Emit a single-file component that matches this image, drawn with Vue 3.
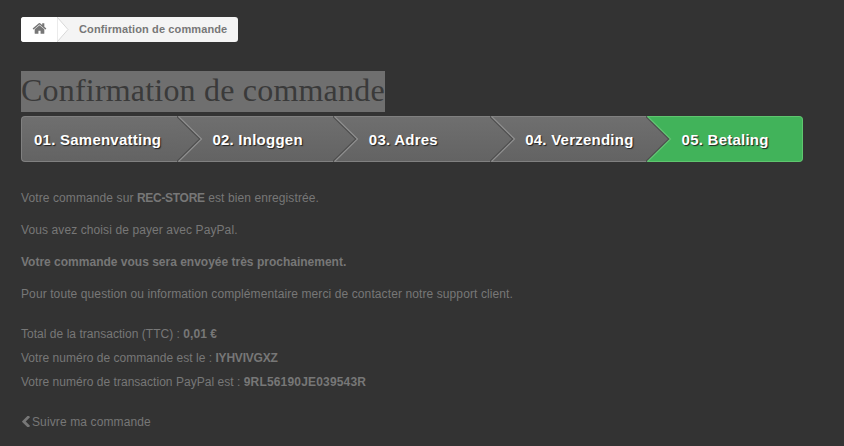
<script setup>
const steps = ['01. Samenvatting', '02. Inloggen', '03. Adres', '04. Verzending', '05. Betaling']
</script>

<template>
  <div class="page">
    <nav class="crumb">
      <span class="crumb-home">
        <svg class="home" viewBox="0 0 1792 1792" aria-hidden="true"><path d="M1472 992v480q0 26-19 45t-45 19h-384v-384h-256v384h-384q-26 0-45-19t-19-45v-480q0-1 .5-3t.5-3l575-474 575 474q1 2 1 6zm223-69l-62 74q-8 9-21 11h-3q-13 0-21-7l-692-577-692 577q-12 8-24 7-13-2-21-11l-62-74q-8-10-7-23.500t11-21.500l719-599q32-26 76-26t76 26l244 204v-195q0-14 9-23t23-9h192q14 0 23 9t9 23v408l219 182q10 8 11 21.500t-7 23.500z"/></svg>
        <svg class="crumb-arrow" viewBox="0 0 12 25" aria-hidden="true"><path d="M0 0 L11 12.500 L0 25 Z" fill="#fff" stroke="#d8d8d8" stroke-width="1"/></svg>
      </span>
      <span class="crumb-text">Confirmation de commande</span>
    </nav>

    <h1 class="title"><span>Confirmation de commande</span></h1>

    <ol class="steps">
      <li v-for="(s, i) in steps" :key="s" class="step" :class="{ first: i === 0, last: i === 4 }">
        <span class="label">{{ s }}</span>
        <svg v-if="i < 4" class="arrow" viewBox="0 0 26 46" aria-hidden="true">
          <path d="M0 0 L23 23 L0 46 Z" :fill="'url(#g' + i + ')'" />
          <path d="M0 0.500 L23 23 L0 45.500" fill="none" stroke="#4c4c4c" stroke-width="1.500" />
          <path d="M1.500 0.500 L24.500 23 L1.500 45.500" fill="none" :stroke="i === 3 ? '#63c274' : '#8f8f8f'" stroke-width="1.200" />
          <defs>
            <linearGradient :id="'g' + i" x1="0" y1="0" x2="0" y2="1">
              <stop offset="0" stop-color="#6f6f6f" />
              <stop offset="1" stop-color="#636363" />
            </linearGradient>
          </defs>
        </svg>
      </li>
    </ol>

    <div class="body">
      <p>Votre commande sur <b class="tight">REC-STORE</b> est bien enregistrée.</p>
      <p>Vous avez choisi de payer avec PayPal.</p>
      <p><b>Votre commande vous sera envoyée très prochainement.</b></p>
      <p>Pour toute question ou information complémentaire merci de contacter notre support client.</p>
    </div>

    <div class="totals">
      <div>Total de la transaction (TTC) : <b>0,01 €</b></div>
      <div>Votre numéro de commande est le : <b class="tight">IYHVIVGXZ</b></div>
      <div>Votre numéro de transaction PayPal est : <b class="wide">9RL56190JE039543R</b></div>
    </div>

    <a class="back">
      <svg class="chev" viewBox="280 100 1170 1450" aria-hidden="true"><path d="M1427 301l-531 531 531 531q19 19 19 45t-19 45l-166 166q-19 19-45 19t-45-19l-742-742q-19-19-19-45t19-45l742-742q19-19 45-19t45 19l166 166q19 19 19 45t-19 45z"/></svg>Suivre ma commande
    </a>
  </div>
</template>

<style>
html, body { margin: 0; background: #333; }
</style>

<style scoped>
.page {
  width: 844px;
  height: 446px;
  overflow: hidden;
  box-sizing: border-box;
  padding: 17px 0 0 21px;
  background: #333;
  color: #777;
  font-family: "Liberation Sans", Arial, sans-serif;
  font-size: 12px;
}
.crumb {
  display: flex;
  align-items: center;
  width: 217px;
  height: 25px;
  background: #f4f4f4;
  border-radius: 3px;
  overflow: hidden;
}
.crumb-home {
  position: relative;
  flex: none;
  display: flex;
  align-items: center;
  width: 36px;
  height: 25px;
  background: #fff;
}
.home { width: 15px; height: 15px; fill: #777; margin-left: 11px; margin-top: -2px; }
.crumb-arrow { position: absolute; left: 36px; top: 0; width: 12px; height: 25px; }
.crumb-text {
  margin-left: 22px;
  margin-bottom: 2px;
  font-size: 11px;
  font-weight: bold;
  letter-spacing: 0.12px;
  color: #777;
  white-space: nowrap;
}
.title {
  margin: 29px 0 4px;
  height: 41px;
  font-family: "Liberation Serif", serif;
  font-weight: normal;
  font-size: 32px;
  line-height: 38px;
  letter-spacing: 0.2px;
  color: #3a3a3a;
}
.title span {
  display: inline-block;
  height: 41px;
  background: #6f6f6f;
  white-space: nowrap;
}
.steps {
  list-style: none;
  margin: 0;
  padding: 0;
  width: 782px;
  height: 46px;
  display: grid;
  grid-template-columns: repeat(5, 1fr);
}
.step {
  position: relative;
  display: flex;
  align-items: center;
  padding-left: 35px;
  background: linear-gradient(#6f6f6f, #636363);
  border-top: 1px solid #808080;
  border-bottom: 1px solid #808080;
  box-sizing: border-box;
}
.step.first { padding-left: 12px; border-left: 1px solid #808080; border-radius: 4px 0 0 4px; }
.step.last {
  background: #41b35a;
  border: 1px solid #5fc66f;
  border-left: 0;
  border-radius: 0 4px 4px 0;
}
.label {
  font-size: 15px;
  font-weight: bold;
  letter-spacing: 0.24px;
  color: #fff;
  text-shadow: 1px 1px 1px #222;
  white-space: nowrap;
}
.arrow {
  position: absolute;
  right: -25.500px;
  top: -1px;
  width: 26px;
  height: 46px;
  z-index: 1;
}
.body { margin-top: 28px; letter-spacing: 0.1px; }
.body p { margin: 0 0 16px; line-height: 16px; }
.body b { letter-spacing: 0; }
.body b.tight { letter-spacing: -0.3px; }
.totals { margin-top: 20px; letter-spacing: 0.03px; }
.totals div { line-height: 24px; }
.totals b.tight { letter-spacing: -0.2px; }
.totals b.wide { letter-spacing: 0.18px; }
.back {
  display: block;
  margin-top: 16px;
  line-height: 24px;
  letter-spacing: 0.12px;
}
.chev { width: 9px; height: 11px; fill: #777; margin-right: 2px; vertical-align: -1px; }
</style>
